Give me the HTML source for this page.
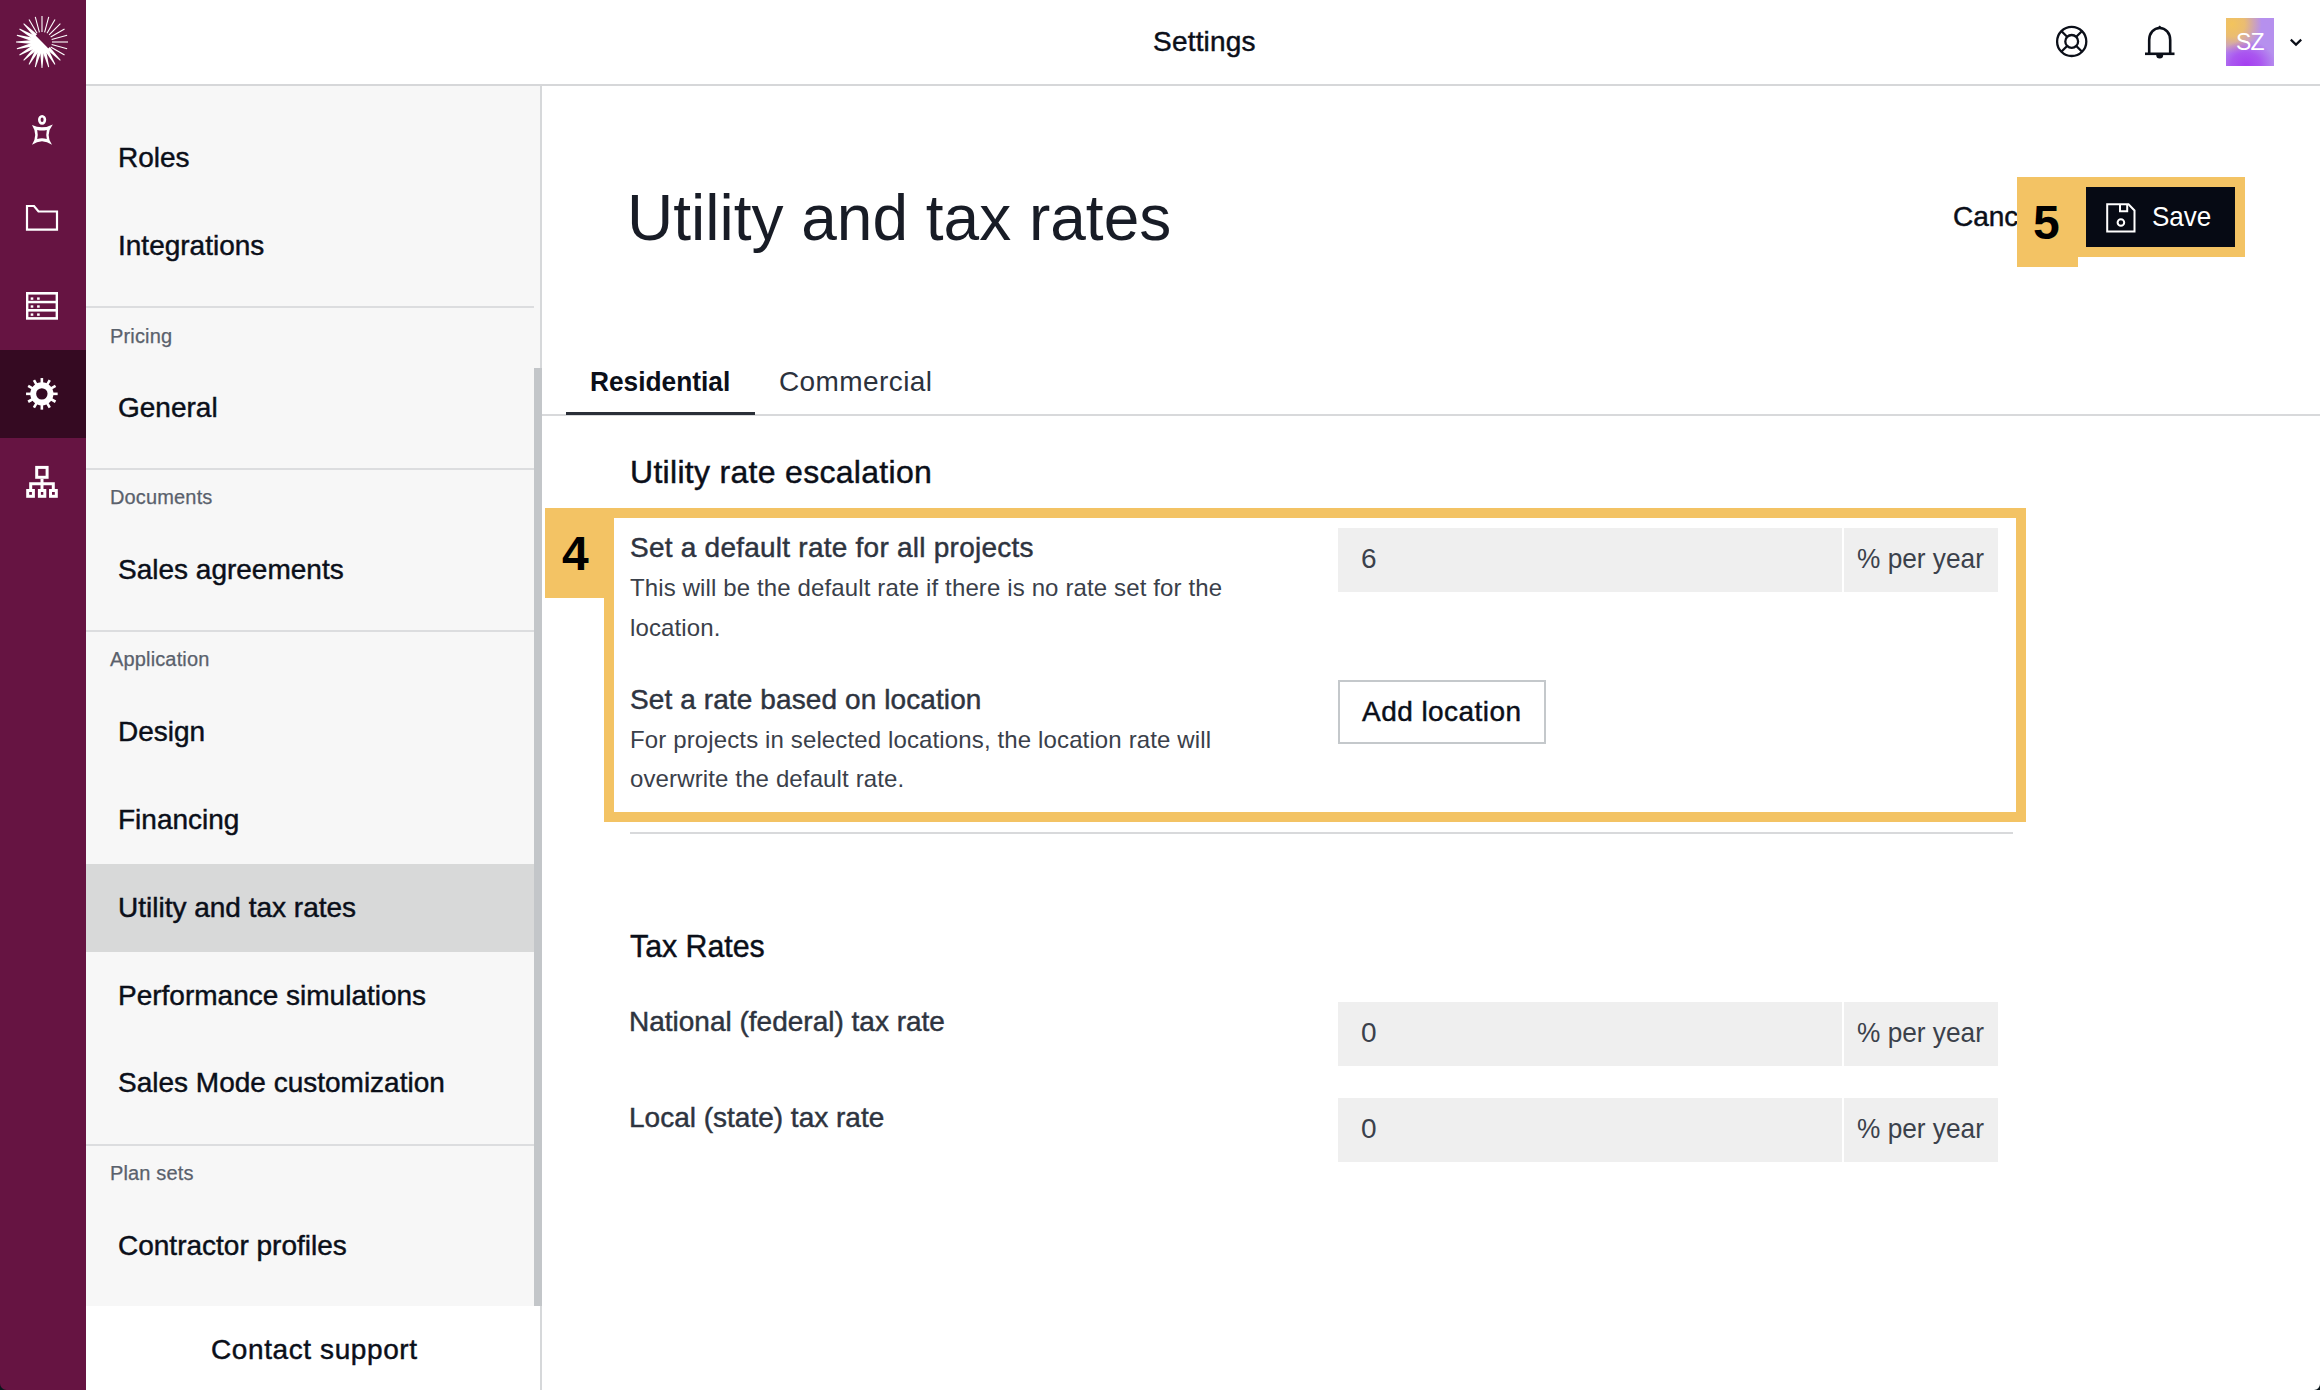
<!DOCTYPE html>
<html><head><meta charset="utf-8">
<style>
html,body{margin:0;padding:0;}
body{width:2320px;height:1390px;position:relative;overflow:hidden;background:#fff;font-family:"Liberation Sans",sans-serif;color:#0b0f19;}
.a{position:absolute;}
.t{position:absolute;white-space:nowrap;line-height:1;}
#rail{left:0;top:0;width:86px;height:1390px;background:#661442;}
#railact{left:0;top:350px;width:86px;height:88px;background:#350a22;}
#hdr{left:86px;top:0;width:2234px;height:84px;background:#fff;border-bottom:2px solid #d6d7d9;}
#side{left:86px;top:86px;width:454px;height:1220px;background:#f7f7f7;}
#sideborder{left:540px;top:86px;width:2px;height:1304px;background:#d6d8da;}
#thumb{left:534px;top:368px;width:8px;height:938px;background:#c3c6c9;}
.div{position:absolute;left:86px;width:448px;height:2px;background:#dcdddf;}
.mi{font-size:28px;left:118px;color:#0b0f19;-webkit-text-stroke:0.45px #0b0f19;}
.med{-webkit-text-stroke:0.45px currentColor;}
.lab{font-size:20px;left:110px;color:#5a616c;-webkit-text-stroke:0.25px #5a616c;letter-spacing:0.15px;}
.f28{font-size:28px;}
.f24{font-size:24px;}
.f32{font-size:32px;}
.lbl{color:#2e3440;}
.desc{color:#3a404a;}
.val{color:#3b414b;}
.inp{position:absolute;background:#efefef;}
.yel{position:absolute;background:#f3c364;}
.num{position:absolute;font-weight:bold;font-size:48px;line-height:1;color:#000;}
</style></head><body>

<!-- left rail -->
<div id="rail" class="a"></div>
<div id="railact" class="a"></div>

<!-- header -->
<div id="hdr" class="a"></div>
<div class="t f28 med" style="left:1153px;top:28px;letter-spacing:0.2px;">Settings</div>

<!-- sidebar -->
<div id="side" class="a"></div>
<div class="a" style="left:86px;top:864px;width:448px;height:88px;background:#d8d9d9;"></div>
<div id="sideborder" class="a"></div>
<div id="thumb" class="a"></div>
<div class="div" style="top:306px;"></div>
<div class="div" style="top:468px;"></div>
<div class="div" style="top:630px;"></div>
<div class="div" style="top:1144px;"></div>

<div class="t mi" style="top:144px;">Roles</div>
<div class="t mi" style="top:232px;">Integrations</div>
<div class="t lab" style="top:326px;">Pricing</div>
<div class="t mi" style="top:394px;">General</div>
<div class="t lab" style="top:487px;">Documents</div>
<div class="t mi" style="top:556px;">Sales agreements</div>
<div class="t lab" style="top:649px;">Application</div>
<div class="t mi" style="top:718px;">Design</div>
<div class="t mi" style="top:806px;">Financing</div>
<div class="t mi" style="top:894px;">Utility and tax rates</div>
<div class="t mi" style="top:982px;">Performance simulations</div>
<div class="t mi" style="top:1069px;">Sales Mode customization</div>
<div class="t lab" style="top:1163px;">Plan sets</div>
<div class="t mi" style="top:1232px;">Contractor profiles</div>
<div class="t mi" style="left:211px;top:1336px;letter-spacing:0.6px;">Contact support</div>

<!-- main -->
<div class="t" style="left:627px;top:186px;font-size:64px;color:#181c26;">Utility and tax rates</div>

<div class="t f28 med" style="left:1953px;top:203px;">Cancel</div>
<div class="yel" style="left:2076px;top:177px;width:169px;height:80px;"></div>
<div class="a" style="left:2086px;top:187px;width:149px;height:60px;background:#060a14;"></div>
<div class="t f28" style="left:2152px;top:203px;color:#fff;transform:scaleX(0.93);transform-origin:0 50%;">Save</div>
<div class="yel" style="left:2017px;top:177px;width:61px;height:90px;"></div>
<div class="num" style="left:2033px;top:199px;">5</div>

<div class="t f28" style="left:590px;top:368px;font-weight:bold;transform:scaleX(0.939);transform-origin:0 50%;">Residential</div>
<div class="t f28" style="left:779px;top:368px;color:#2c323d;letter-spacing:0.4px;">Commercial</div>
<div class="a" style="left:542px;top:414px;width:1778px;height:2px;background:#d8d9db;"></div>
<div class="a" style="left:566px;top:412px;width:189px;height:3px;background:#2a2f38;"></div>

<div class="t f32 med" style="left:630px;top:456px;letter-spacing:0.3px;">Utility rate escalation</div>

<!-- highlight frame 4 -->
<div class="a" style="left:604px;top:508px;width:1402px;height:294px;border:10px solid #f3c364;"></div>
<div class="yel" style="left:545px;top:508px;width:59px;height:90px;"></div>
<div class="num" style="left:562px;top:530px;">4</div>

<div class="t f28 lbl med" style="left:630px;top:534px;letter-spacing:0.24px;">Set a default rate for all projects</div>
<div class="t f24 desc" style="left:630px;top:576px;letter-spacing:0.13px;">This will be the default rate if there is no rate set for the</div>
<div class="t f24 desc" style="left:630px;top:616px;letter-spacing:0.13px;">location.</div>
<div class="inp" style="left:1338px;top:528px;width:504px;height:64px;"></div>
<div class="inp" style="left:1844px;top:528px;width:154px;height:64px;"></div>
<div class="t f28 val" style="left:1361px;top:545px;">6</div>
<div class="t f28 val" style="left:1857px;top:545px;transform:scaleX(0.9375);transform-origin:0 50%;">% per year</div>

<div class="t f28 lbl med" style="left:630px;top:686px;letter-spacing:0.1px;">Set a rate based on location</div>
<div class="t f24 desc" style="left:630px;top:728px;letter-spacing:0.13px;">For projects in selected locations, the location rate will</div>
<div class="t f24 desc" style="left:630px;top:767px;letter-spacing:0.13px;">overwrite the default rate.</div>
<div class="a" style="left:1338px;top:680px;width:204px;height:60px;border:2px solid #c4c8cb;background:#fff;"></div>
<div class="t f28 med" style="left:1362px;top:698px;letter-spacing:0.45px;">Add location</div>

<div class="a" style="left:630px;top:832px;width:1383px;height:2px;background:#d8d9db;"></div>

<div class="t f32 med" style="left:630px;top:930px;transform:scaleX(0.947);transform-origin:0 50%;">Tax Rates</div>
<div class="t f28 lbl med" style="left:629px;top:1008px;">National (federal) tax rate</div>
<div class="inp" style="left:1338px;top:1002px;width:504px;height:64px;"></div>
<div class="inp" style="left:1844px;top:1002px;width:154px;height:64px;"></div>
<div class="t f28 val" style="left:1361px;top:1019px;">0</div>
<div class="t f28 val" style="left:1857px;top:1019px;transform:scaleX(0.9375);transform-origin:0 50%;">% per year</div>

<div class="t f28 lbl med" style="left:629px;top:1104px;">Local (state) tax rate</div>
<div class="inp" style="left:1338px;top:1098px;width:504px;height:64px;"></div>
<div class="inp" style="left:1844px;top:1098px;width:154px;height:64px;"></div>
<div class="t f28 val" style="left:1361px;top:1115px;">0</div>
<div class="t f28 val" style="left:1857px;top:1115px;transform:scaleX(0.9375);transform-origin:0 50%;">% per year</div>

<!-- ICONS -->
<!--ICONS_START-->
<svg class="a" style="left:0;top:0" width="86" height="86" viewBox="0 0 86 86"><g fill="#fff"><polygon points="42.55,32 42.55,16 41.45,16 41.45,32"/><polygon points="45.12,32.48 49.26,17.03 48.2,16.74 44.06,32.2"/><polygon points="47.48,33.61 55.48,19.76 54.52,19.21 46.52,33.06"/><polygon points="49.46,35.32 60.77,24 60,23.23 48.68,34.54"/><polygon points="50.94,37.48 64.79,29.48 64.24,28.52 50.39,36.52"/><polygon points="51.8,39.94 67.26,35.8 66.97,34.74 51.52,38.88"/><polygon points="52,42.55 68,42.55 68,41.45 52,41.45"/><polygon points="51.52,45.12 66.97,49.26 67.26,48.2 51.8,44.06"/><polygon points="50.39,47.48 64.24,55.48 64.79,54.52 50.94,46.52"/><polygon points="47.02,49.71 60.07,60.7 60.7,60.07 49.71,47.02"/><polygon points="44.85,50.74 54.61,64.74 55.39,64.29 48.15,48.84"/><polygon points="42.49,51.19 48.29,67.23 49.16,67 46.16,50.2"/><polygon points="40.1,51 41.55,68 42.45,68 43.9,51"/><polygon points="37.84,50.2 34.84,67 35.71,67.23 41.51,51.19"/><polygon points="35.85,48.84 28.61,64.29 29.39,64.74 39.15,50.74"/><polygon points="34.29,47.02 23.3,60.07 23.93,60.7 36.98,49.71"/><polygon points="33.26,44.85 19.26,54.61 19.71,55.39 35.16,48.15"/><polygon points="32.81,42.49 16.77,48.29 17,49.16 33.8,46.16"/><polygon points="33,40.1 16,41.55 16,42.45 33,43.9"/><polygon points="33.8,37.84 17,34.84 16.77,35.71 32.81,41.51"/><polygon points="35.16,35.85 19.71,28.61 19.26,29.39 33.26,39.15"/><polygon points="36.98,34.29 23.93,23.3 23.3,23.93 34.29,36.98"/><polygon points="37.48,33.06 29.48,19.21 28.52,19.76 36.52,33.61"/><polygon points="39.94,32.2 35.8,16.74 34.74,17.03 38.88,32.48"/><path d="M33.87 33.87 A11.5 11.5 0 0 0 50.13 50.13 Z"/></g></svg>
<svg class="a" style="left:0;top:100px" width="86" height="60" viewBox="0 100 86 60"><ellipse cx="42.1" cy="119.8" rx="2.8" ry="3.6" fill="none" stroke="#fff" stroke-width="2.6"/><path fill="#fff" fill-rule="evenodd" d="M32 125 Q42.4 129.9 52.8 124.4 Q45 134.6 52 144.8 Q42 137.6 32 144.8 Q38.4 134.9 32 125 Z M37.2 130 Q42 131.2 46.8 130 Q45.8 134.5 46.8 139 Q42 137.6 37.2 139 Q38.2 134.5 37.2 130 Z"/></svg>
<svg class="a" style="left:0;top:190px" width="86" height="60" viewBox="0 190 86 60"><path d="M27 206 H34 L38.5 211.5 H57 V229.7 H27 Z" fill="none" stroke="#fff" stroke-width="2.2"/></svg>
<svg class="a" style="left:0;top:280px" width="86" height="50" viewBox="0 280 86 50"><rect x="26" y="292" width="32" height="27.7" fill="#fff"/><g fill="#661442"><rect x="28.4" y="294.6" width="27.2" height="6.2"/><rect x="28.4" y="303.3" width="27.2" height="5.7"/><rect x="28.4" y="311.6" width="27.2" height="5.5"/></g><g fill="#fff"><rect x="30.7" y="297.4" width="2.6" height="2.4"/><rect x="37.1" y="297.4" width="2.6" height="2.4"/><rect x="30.7" y="305.3" width="2.6" height="2.4"/><rect x="37.1" y="305.3" width="2.6" height="2.4"/><rect x="30.7" y="313.4" width="2.6" height="2.4"/><rect x="37.1" y="313.4" width="2.6" height="2.4"/></g></svg>
<svg class="a" style="left:0;top:370px" width="86" height="50" viewBox="0 370 86 50"><g fill="#fff"><rect x="40.55" y="378.05" width="2.6" height="6" transform="rotate(0 41.85 393.85)"/><rect x="40.55" y="378.05" width="2.6" height="6" transform="rotate(30 41.85 393.85)"/><rect x="40.55" y="378.05" width="2.6" height="6" transform="rotate(60 41.85 393.85)"/><rect x="40.55" y="378.05" width="2.6" height="6" transform="rotate(90 41.85 393.85)"/><rect x="40.55" y="378.05" width="2.6" height="6" transform="rotate(120 41.85 393.85)"/><rect x="40.55" y="378.05" width="2.6" height="6" transform="rotate(150 41.85 393.85)"/><rect x="40.55" y="378.05" width="2.6" height="6" transform="rotate(180 41.85 393.85)"/><rect x="40.55" y="378.05" width="2.6" height="6" transform="rotate(210 41.85 393.85)"/><rect x="40.55" y="378.05" width="2.6" height="6" transform="rotate(240 41.85 393.85)"/><rect x="40.55" y="378.05" width="2.6" height="6" transform="rotate(270 41.85 393.85)"/><rect x="40.55" y="378.05" width="2.6" height="6" transform="rotate(300 41.85 393.85)"/><rect x="40.55" y="378.05" width="2.6" height="6" transform="rotate(330 41.85 393.85)"/><path fill-rule="evenodd" d="M30.25 393.85 a11.6 11.6 0 1 0 23.2 0 a11.6 11.6 0 1 0 -23.2 0 Z M36.15 393.85 a5.7 5.7 0 1 0 11.4 0 a5.7 5.7 0 1 0 -11.4 0 Z"/></g></svg>
<svg class="a" style="left:0;top:455px" width="86" height="55" viewBox="0 455 86 55"><g fill="none" stroke="#fff" stroke-width="3"><rect x="36.7" y="467.4" width="10.4" height="9.9"/><line x1="42" y1="478.8" x2="42" y2="489"/><path d="M30.7 489 V483.75 H53.3 V489"/><rect x="27.7" y="490.5" width="5.7" height="5.8"/><rect x="39.4" y="490.5" width="5.4" height="5.8"/><rect x="50.5" y="490.5" width="5.8" height="5.8"/></g></svg>
<svg class="a" style="left:2050px;top:20px" width="44" height="44" viewBox="2050 20 44 44"><g fill="none" stroke="#0b0f19" stroke-width="2.3"><circle cx="2071.7" cy="41.4" r="14.6"/><circle cx="2071.7" cy="41.4" r="6.4"/><line x1="2076.3" y1="46" x2="2082.31" y2="52.01"/><line x1="2067.1" y1="46" x2="2061.09" y2="52.01"/><line x1="2067.1" y1="36.8" x2="2061.09" y2="30.79"/><line x1="2076.3" y1="36.8" x2="2082.31" y2="30.79"/></g></svg>
<svg class="a" style="left:2140px;top:20px" width="40" height="44" viewBox="2140 20 40 44"><g fill="none" stroke="#0b0f19" stroke-width="2.6" stroke-linejoin="round"><path d="M2149.2 53.5 V40 C2149.2 33 2153.8 28 2159.7 28 C2165.6 28 2170.2 33 2170.2 40 V53.5"/><line x1="2145" y1="53.8" x2="2174.5" y2="53.8"/></g><path d="M2156.2 55 A3.5 3.5 0 0 0 2163.2 55 Z" fill="#0b0f19"/><path d="M2157.6 27.6 L2159.7 25.6 L2161.8 27.6 Z" fill="#0b0f19"/></svg>
<div class="a" style="left:2226px;top:18px;width:48px;height:48px;overflow:hidden;background:#b690ee;">
<div class="a" style="left:-24px;top:-24px;width:60px;height:60px;background:radial-gradient(circle at 50% 50%, #f3c45c 0%, rgba(243,196,92,0.85) 30%, rgba(243,196,92,0) 70%);"></div>
<div class="a" style="left:-10px;top:22px;width:60px;height:50px;background:radial-gradient(ellipse at 50% 50%, #a53ff0 0%, rgba(165,63,240,0.7) 35%, rgba(165,63,240,0) 70%);"></div>
<div class="t" style="left:10px;top:13px;font-size:23px;color:#fff;letter-spacing:-0.8px;">SZ</div></div>
<svg class="a" style="left:2285px;top:32px" width="22" height="20" viewBox="2285 32 22 20"><path d="M2290.8 39.6 L2296 44.6 L2301.2 39.6" fill="none" stroke="#0b0f19" stroke-width="2.2"/></svg>
<svg class="a" style="left:2100px;top:198px" width="42" height="40" viewBox="2100 198 42 40"><g fill="none" stroke="#fff" stroke-width="2"><path d="M2107.2 204.3 H2128.5 L2134.5 210.5 V231.5 H2107.2 Z"/><path d="M2120 204.3 V211.2 H2127.2 V204.3"/><circle cx="2120.9" cy="222.5" r="3.3"/></g></svg>
<!--ICONS_END-->
<svg class="a" style="left:2310px;top:1380px" width="10" height="10" viewBox="0 0 10 10"><path d="M10 4 A6 6 0 0 1 4 10 L10 10 Z" fill="#0a161b"/></svg>
<svg class="a" style="left:0;top:1380px" width="10" height="10" viewBox="0 0 10 10"><path d="M0 3.5 A6.5 6.5 0 0 0 6.5 10 L0 10 Z" fill="#0a161b"/></svg>
</body></html>
